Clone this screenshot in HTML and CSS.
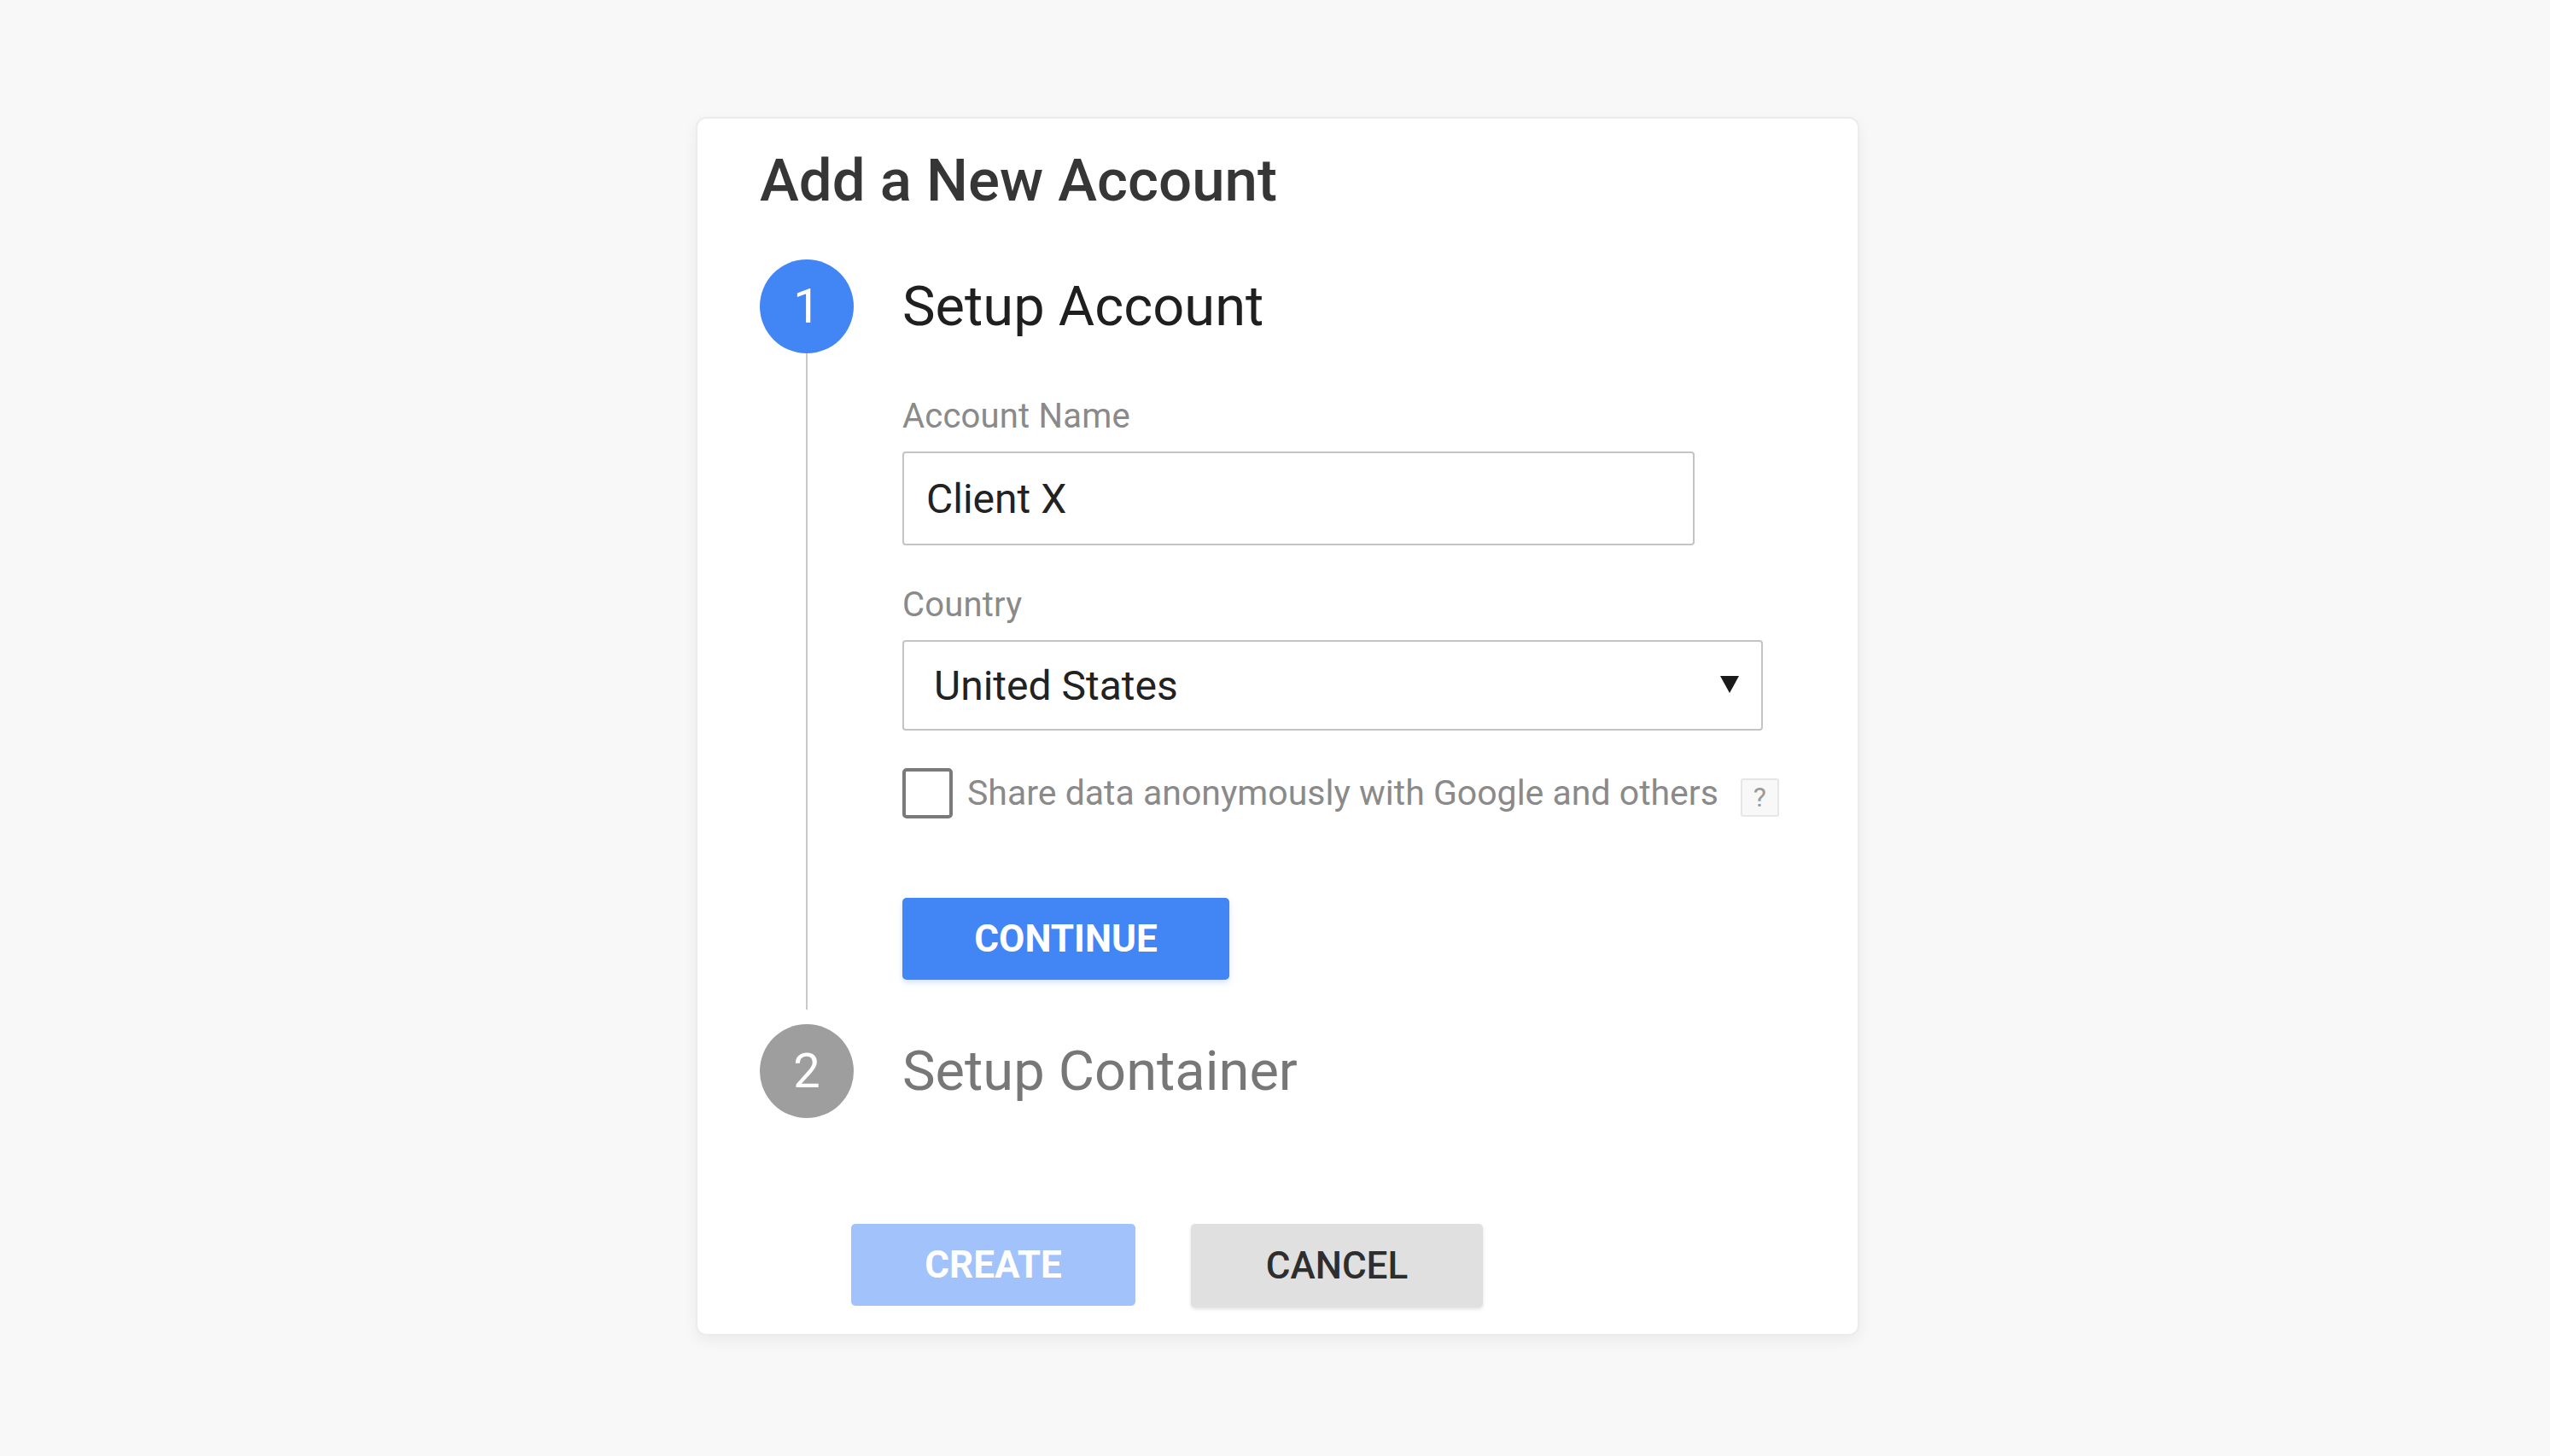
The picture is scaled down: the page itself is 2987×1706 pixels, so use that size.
FILE: index.html
```html
<!DOCTYPE html>
<html lang="en">
<head>
<meta charset="utf-8">
<title>Add a New Account</title>
<link rel="stylesheet" href="styles.css">
</head>
<body>
<main class="card">
  <h1 class="card-title">Add a New Account</h1>

  <section class="step step-active">
    <div class="step-marker">1</div>
    <h2 class="step-title">Setup Account</h2>
    <div class="step-rail"></div>
    <div class="step-body">
      <label class="field-label" for="account-name">Account Name</label>
      <input class="text-input" id="account-name" type="text" value="Client X">

      <div class="field-label field-label-spaced">Country</div>
      <div class="select-box">
        <span class="select-value">United States</span>
        <svg class="select-arrow" width="22" height="20" viewBox="0 0 22 20" aria-hidden="true"><polygon points="0,0 22,0 11,20" fill="#1a1a1a"/></svg>
      </div>

      <div class="check-row">
        <span class="checkbox"></span>
        <span class="check-label">Share data anonymously with Google and others</span>
        <span class="help-box">?</span>
      </div>

      <button class="btn btn-primary btn-continue" type="button">CONTINUE</button>
    </div>
  </section>

  <section class="step step-inactive">
    <div class="step-marker">2</div>
    <h2 class="step-title">Setup Container</h2>
  </section>

  <div class="actions">
    <button class="btn btn-create" type="button">CREATE</button>
    <button class="btn btn-cancel" type="button">CANCEL</button>
  </div>
</main>
</body>
</html>
```

FILE: styles.css
```css
* {
  box-sizing: border-box;
}

html, body {
  margin: 0;
  padding: 0;
}

body {
  min-height: 100vh;
  padding: 0 0 4px 6px;
  background: #f8f8f8;
  font-family: Roboto, "Liberation Sans", Arial, sans-serif;
  display: flex;
  align-items: center;
  justify-content: center;
}

.card {
  width: 1363px;
  background: #ffffff;
  border: 2px solid #ececec;
  border-radius: 12px;
  box-shadow: 0 6px 18px rgba(0, 0, 0, 0.06);
  padding: 33px 60px 31px 73px;
  display: flex;
  flex-direction: column;
}

.card-title {
  margin: 0;
  font-size: 69px;
  line-height: 80px;
  font-weight: 500;
  color: #363636;
}

.step {
  display: grid;
  grid-template-columns: 110px 1fr;
  column-gap: 57px;
}

.step-active {
  margin-top: 52px;
}

.step-inactive {
  margin-top: 17px;
}

.step-marker {
  width: 110px;
  height: 110px;
  border-radius: 50%;
  color: #ffffff;
  font-size: 56px;
  line-height: 110px;
  text-align: center;
}

.step-active .step-marker {
  background: #4285f4;
}

.step-inactive .step-marker {
  background: #9e9e9e;
}

.step-title {
  margin: 0;
  font-size: 65px;
  line-height: 110px;
  font-weight: 400;
}

.step-active .step-title {
  color: #1f1f1f;
}

.step-inactive .step-title {
  color: #777777;
}

.step-rail {
  justify-self: center;
  width: 2px;
  background: #c9c9c9;
}

.step-body {
  padding: 50px 0 35px 0;
  display: flex;
  flex-direction: column;
  align-items: flex-start;
}

.field-label {
  display: block;
  font-size: 40px;
  line-height: 48px;
  color: #8a8a8a;
  letter-spacing: 0.2px;
}

.field-label-spaced {
  margin-top: 46px;
}

.text-input {
  margin-top: 17px;
  width: 928px;
  height: 110px;
  border: 2px solid #c4c4c4;
  border-radius: 4px;
  padding: 0 0 0 26px;
  font-family: Roboto, "Liberation Sans", Arial, sans-serif;
  font-size: 48px;
  color: #222222;
  background: #ffffff;
  outline: none;
}

.select-box {
  margin-top: 17px;
  width: 1008px;
  height: 106px;
  border: 2px solid #c4c4c4;
  border-radius: 4px;
  padding: 0 26px 0 35px;
  display: flex;
  align-items: center;
  justify-content: space-between;
}

.select-value {
  font-size: 48px;
  color: #222222;
}

.select-arrow {
  display: block;
  margin-top: -2px;
}

.check-row {
  margin-top: 44px;
  height: 59px;
  display: flex;
  align-items: center;
}

.checkbox {
  width: 59px;
  height: 59px;
  border: 4px solid #7a7a7a;
  border-radius: 5px;
  background: #ffffff;
}

.check-label {
  margin-left: 17px;
  font-size: 41px;
  line-height: 59px;
  color: #8a8a8a;
}

.help-box {
  align-self: flex-end;
  margin: 0 0 2px 26px;
  width: 45px;
  height: 45px;
  border: 2px solid #e6e6e6;
  border-radius: 3px;
  background: #f8f8f8;
  color: #9a9a9a;
  font-size: 32px;
  line-height: 41px;
  text-align: center;
}

.btn {
  height: 96px;
  border: none;
  border-radius: 5px;
  font-family: Roboto, "Liberation Sans", Arial, sans-serif;
  font-size: 44px;
  padding: 0;
  cursor: pointer;
}

.btn-primary {
  background: #4285f4;
  color: #ffffff;
  font-weight: 700;
  box-shadow: 0 3px 6px rgba(66, 133, 244, 0.25);
}

.btn-continue {
  margin-top: 93px;
  width: 383px;
}

.actions {
  margin-top: 124px;
  padding-left: 107px;
  display: flex;
  align-items: flex-start;
  gap: 65px;
}

.btn-create {
  width: 333px;
  background: #a1c2fa;
  color: #ffffff;
  font-weight: 700;
}

.btn-cancel {
  width: 342px;
  height: 98px;
  background: #e0e0e0;
  color: #2e2e2e;
  font-weight: 500;
  box-shadow: 0 2px 4px rgba(0, 0, 0, 0.12);
}
```
